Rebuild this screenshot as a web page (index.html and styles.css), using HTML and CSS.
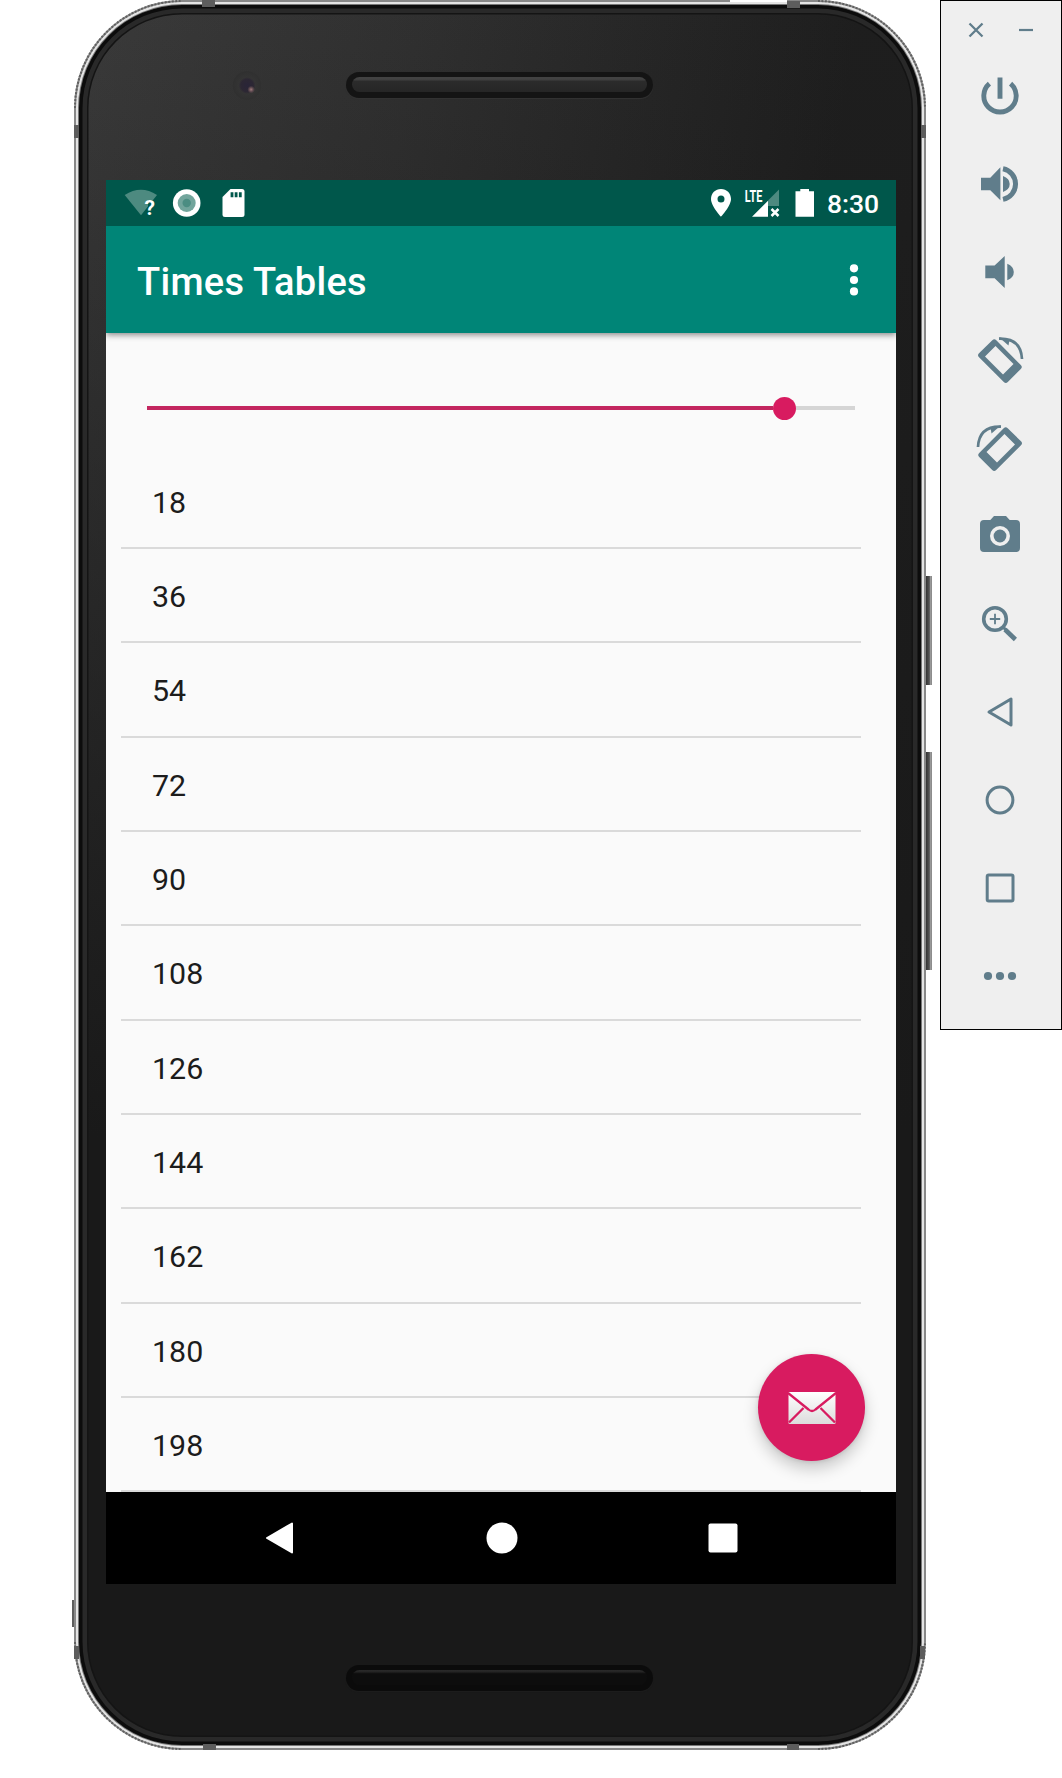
FILE: index.html
```html
<!DOCTYPE html>
<html lang="en">
<head>
<meta charset="utf-8">
<title>Times Tables</title>
<link rel="stylesheet" href="styles.css">
</head>
<body>
<main class="emulator">
  <section class="phone">
    <svg class="shell" width="864" height="1754" viewBox="0 0 864 1754" aria-hidden="true">
      <defs>
        <linearGradient id="key" x1="0" x2="1" y1="0" y2="0"><stop offset="0" stop-color="#333"/><stop offset=".55" stop-color="#555"/><stop offset=".8" stop-color="#aaa"/><stop offset="1" stop-color="#777"/></linearGradient>
      </defs>
      <g fill="none" stroke="#606060" stroke-width="2" stroke-dasharray="2 1.5">
        <path d="M7 108A107 107 0 0 1 114 1M750 1A107 107 0 0 1 857 108M7 1642A107 107 0 0 0 114 1749M750 1749A107 107 0 0 0 857 1642"/>
      </g>
      <path d="M662 0h57v2h-57z" fill="#fff"/>
      <g fill="#5d5d5d">
        <path d="M134 0h13v7h-13zM719 1h13v7h-13zM6 125h5v13H6zM853 125h5v13h-5z"/>
        <path d="M135 1744h13v6h-13zM719 1744h12v6h-12zM6 1646h5v13H6zM852 1646h5v13h-5zM4 1600h2v27H4z"/>
      </g>
      <path d="M858 576h6v109h-6zM858 752h6v218h-6z" fill="url(#key)"/>
    </svg>

    <header class="bezel bezel-top">
      <span class="camera"></span>
      <span class="speaker"></span>
    </header>

    <div class="screen">
      <div class="status">
        <svg width="130" height="46" viewBox="0 0 130 46">
          <path d="M18.700 15Q35 4.500 51 15L35 35.300z" fill="#4d8a80"/>
          <path d="M42 20h12v18H42z" fill="#00574b"/>
          <text class="question" x="38.500" y="34.500">?</text>
          <circle cx="80.700" cy="23" r="13.800" fill="#fff"/><circle cx="80.700" cy="23" r="9" fill="#72a59c"/><circle cx="80.700" cy="23" r="4.200" fill="#4b8d82"/>
        </svg>
        <svg class="sd" width="24" height="46" viewBox="0 0 24 46"><path d="M8.500 9H20q2.500 0 2.500 2.500v23q0 2.500-2.500 2.500H3q-2.500 0-2.500-2.500V17z" fill="#fff"/><path d="M8.600 12.200h2.800v5H8.600zm4.100 0h2.800v5h-2.800zm4.200 0h2.800v5h-2.800z" fill="#00574b"/></svg>
        <span class="grow"></span>
        <svg width="118" height="46" viewBox="0 0 118 46">
          <path fill="#fff" fill-rule="evenodd" d="M15 9C9.300 9 5 13.300 5 19c0 7.200 10 17.700 10 17.700S25 26.200 25 19C25 13.300 20.700 9 15 9zm0 6.600a3.500 3.500 0 1 1 0 7 3.500 3.500 0 0 1 0-7z"/>
          <text class="lte" x="38.800" y="21.900" textLength="17.500" lengthAdjust="spacingAndGlyphs">LTE</text>
          <path d="M73 9.500V26H62v-5.500z" fill="#4d8a80"/>
          <path d="M46 36.800 62 20.800v16z" fill="#fff"/>
          <path d="m65.500 29 7 7m0-7-7 7" stroke="#fff" stroke-width="2.500"/>
          <path d="M89.500 11.300h4.800V9h8.700v2.300h5v25.500H89.500z" fill="#fff"/>
        </svg>
        <span class="clock">8:30</span>
      </div>
      <div class="appbar">
        <h1>Times Tables</h1>
        <svg width="10" height="34" viewBox="0 0 10 34" fill="#fff"><circle cx="5" cy="5.300" r="4.100"/><circle cx="5" cy="17" r="4.100"/><circle cx="5" cy="28.400" r="4.100"/></svg>
      </div>
      <div class="content">
        <div class="slider"><span class="filled"></span><span class="thumb"></span><span class="rest"></span></div>
        <ul class="table">
          <li>18</li><li>36</li><li>54</li><li>72</li><li>90</li><li>108</li><li>126</li><li>144</li><li>162</li><li>180</li><li>198</li>
        </ul>
        <button class="fab" aria-label="Mail">
          <svg width="48" height="34" viewBox="0 0 48 34">
            <defs><linearGradient id="mail" x1="0" x2="0" y1="0" y2="1"><stop offset="0" stop-color="#fff"/><stop offset="1" stop-color="#dcdcdc"/></linearGradient></defs>
            <rect x=".5" y="1" width="47" height="32" rx="1" fill="url(#mail)"/>
            <path d="M0 2 20.500 18.500Q24 21.500 27.500 18.500L48 2M1 31.500 15.500 17M47 31.500 32.500 17" fill="none" stroke="#d81b60" stroke-width="2.300"/>
          </svg>
        </button>
      </div>
      <nav class="navbar">
        <svg width="30" height="34" viewBox="0 0 30 34"><path d="M27 2.500v29L2 17z" fill="#fff" stroke="#fff" stroke-width="2" stroke-linejoin="round"/></svg>
        <svg width="32" height="32" viewBox="0 0 32 32"><circle cx="16" cy="16" r="15.500" fill="#fff"/></svg>
        <svg width="30" height="30" viewBox="0 0 30 30"><rect x=".5" y=".5" width="29" height="29" rx="2" fill="#fff"/></svg>
      </nav>
    </div>

    <footer class="bezel bezel-bottom">
      <span class="speaker"></span>
    </footer>
  </section>

  <aside class="tools">
    <div class="window">
      <svg width="16" height="16" viewBox="0 0 16 16"><path d="m1.500 1.500 13 13m0-13-13 13" stroke="#607d8b" stroke-width="2.300"/></svg>
      <svg width="14" height="16" viewBox="0 0 14 16"><path d="M0 8h14" stroke="#607d8b" stroke-width="2.200"/></svg>
    </div>
    <svg class="tool" viewBox="0 0 48 48"><path d="M13.400 11.600A16.200 16.200 0 1 0 34.600 11.600M24 5.400v21.300" class="line" stroke-width="4.900"/></svg>
    <svg class="tool" viewBox="0 0 48 48"><path d="M5 17.700h9.300L24.400 7.300v33L14.300 30.300H5zM27 16q6.700 2.500 6.700 8T27 32z"/><path d="M27 8.800A15.600 15.600 0 0 1 27 39.400" class="line" stroke-width="5"/></svg>
    <svg class="tool" viewBox="0 0 48 48"><path d="M9.300 17.600h9.300L28.700 8v32L18.600 30.300H9.300zM31.300 15.700q6.500 2.700 6.500 8.300t-6.500 8.300z"/></svg>
    <svg class="tool" viewBox="0 0 48 48"><path fill-rule="evenodd" d="M16.300 4.200 3 17.300q-2 2 0 4L27.800 46q2 2 4 0L44.800 33q2-2 0-4L20.300 4.200q-2-2-4 0zM19.500 10 37.500 28 27 38.500 9 20.500z"/><path d="M23 2.600Q45 2 46 23" class="line" stroke-width="2.700"/><path d="M23 1.300 32.500 9.500 33.500 4z"/></svg>
    <svg class="tool mirror" viewBox="0 0 48 48"><path fill-rule="evenodd" d="M16.300 4.200 3 17.300q-2 2 0 4L27.800 46q2 2 4 0L44.800 33q2-2 0-4L20.300 4.200q-2-2-4 0zM19.500 10 37.500 28 27 38.500 9 20.500z"/><path d="M23 2.600Q45 2 46 23" class="line" stroke-width="2.700"/><path d="M23 1.300 32.500 9.500 33.500 4z"/></svg>
    <svg class="tool" viewBox="0 0 48 48"><path fill-rule="evenodd" d="M18 4 14.300 8H8q-4 0-4 4v24q0 4 4 4h32q4 0 4-4V12q0-4-4-4h-6.300L30 4zM24 14a10 10 0 1 1 0 20 10 10 0 0 1 0-20z"/><circle cx="24" cy="24" r="6.400"/></svg>
    <svg class="tool" viewBox="0 0 48 48"><circle cx="19" cy="19" r="11.300" class="line" stroke-width="3.600"/><path d="M19 13.800v10.400M13.800 19h10.400" class="line" stroke-width="1.800"/><path d="m27 27 3 3" class="line" stroke-width="3"/><path d="m29 29.500 10.400 10" class="line" stroke-width="4.600"/></svg>
    <svg class="tool" viewBox="0 0 48 48"><path d="M13 24 35 11v26z" class="line" stroke-width="3" stroke-linejoin="round"/></svg>
    <svg class="tool" viewBox="0 0 48 48"><circle cx="24" cy="24" r="12.900" class="line" stroke-width="3"/></svg>
    <svg class="tool" viewBox="0 0 48 48"><rect x="11.200" y="11" width="25.800" height="26" rx="1.500" class="line" stroke-width="3"/></svg>
    <svg class="tool" viewBox="0 0 48 48"><circle cx="12" cy="24" r="4.100"/><circle cx="24" cy="24" r="4.100"/><circle cx="36" cy="24" r="4.100"/></svg>
  </aside>
</main>
</body>
</html>
```
FILE: styles.css
```css
* { box-sizing: border-box; }
body {
  margin: 0;
  background: #fff;
  font-family: Roboto, "Liberation Sans", sans-serif;
}
svg { display: block; flex: none; }

.emulator {
  display: flex;
  align-items: flex-start;
  width: 1062px;
  height: 1778px;
  padding-left: 74px;
}

/* Phone body: nested rings run from the metal rim to the glass edge. */
.phone {
  position: relative;
  display: flex;
  flex-direction: column;
  width: 852px;
  height: 1750px;
  padding: 0 30px 0 32px;
  border-radius: 108px;
  background:
    linear-gradient(to bottom, transparent 0, #191919 65%),
    linear-gradient(100deg, #3b3b3b 0%, #303030 30%, #1e1e1e 68%);
  box-shadow:
    inset 0 0 0 2px #888,
    inset 0 0 0 4px #e4e4e4,
    inset 0 0 0 5px #777,
    inset 0 0 0 8.500px #0c0c0c,
    inset 0 0 0 13px #292929,
    inset 0 0 0 14.500px #141414;
}
.shell { position: absolute; left: -6px; top: 0; }

.bezel { display: flex; flex: none; }
.bezel-top { height: 180px; padding: 71px 0 0 126px; gap: 85px; }
.bezel-bottom { height: 166px; padding: 81px 0 0 240px; }
.camera {
  width: 29px;
  height: 29px;
  border-radius: 50%;
  background: radial-gradient(circle at 66% 64%, #a07a7c 0, #5c484e 8%, transparent 14%), radial-gradient(circle at 52% 50%, #292438 0, #2c2733 30%, #343434 40%, #303030 66%, transparent 70%);
}
.speaker {
  width: 307px;
  height: 26px;
  margin-top: 1px;
  padding: 5px 6px;
  border-radius: 13px;
  background: #141414;
  box-shadow: 0 1px 1px #333;
}
.speaker::before {
  content: "";
  display: block;
  height: 15px;
  border-radius: 8px;
  background: linear-gradient(#424242 0, #424242 15%, #2b2b2b 30%, #262626 100%);
}
.bezel-bottom .speaker { margin-top: 0; background: #0b0b0b; box-shadow: 0 1px 1px #1d1d1d; }
.bezel-bottom .speaker::before { background: linear-gradient(#2a2a2a 0, #242424 12%, #0d0d0d 25%); }

.screen {
  display: flex;
  flex-direction: column;
  width: 790px;
  height: 1404px;
  flex: none;
}
.status {
  display: flex;
  height: 46px;
  padding-right: 17px;
  background: #00574b;
  color: #fff;
}
.status svg { overflow: visible; }
.status .sd { margin-left: -14px; }
.grow { flex: 1; }
.question { font: 700 21px Roboto, sans-serif; fill: #fff; }
.lte { font: 700 17px Roboto, sans-serif; fill: #fff; }
.clock { margin-left: 3px; font-size: 26.500px; font-weight: 500; line-height: 47px; width: 52px; white-space: nowrap; }
.appbar {
  position: relative;
  z-index: 1;
  display: flex;
  align-items: center;
  justify-content: space-between;
  height: 107.300px;
  flex: none;
  padding: 0 37.500px 0 31px;
  background: #008577;
  box-shadow: 0 2px 6px rgba(0, 0, 0, .45);
  clip-path: inset(0 0 -12px 0);
  color: #fff;
}
.appbar h1 { margin: 4px 0 0; font-size: 38px; font-weight: 500; line-height: 44px; letter-spacing: .280px; }

.content {
  position: relative;
  flex: 1;
  overflow: hidden;
  padding: 60.200px 35px 0 15px;
  background: #fafafa;
}
.slider { display: flex; align-items: center; height: 30px; margin: 0 6px 0 25.500px; }
.filled { width: 626px; height: 4px; background: #c3265f; }
.thumb { width: 23px; height: 23px; border-radius: 50%; background: #d81b60; }
.rest { flex: 1; height: 4px; background: #d5d5d5; }
.table { margin: 31.400px 0 0; padding: 0; list-style: none; }
.table li {
  height: 94.300px;
  padding: 2px 0 0 31px;
  border-bottom: 2px solid #dadada;
  color: #1c1c1c;
  font-size: 30.400px;
  line-height: 92px;
}
.fab {
  position: absolute;
  right: 31px;
  bottom: 31px;
  display: grid;
  place-items: center;
  width: 107px;
  height: 107px;
  padding: 0;
  border: 0;
  border-radius: 50%;
  background: #d81b60;
  box-shadow: 0 8px 16px rgba(0, 0, 0, .2), 0 1px 4px rgba(0, 0, 0, .1);
}
.navbar {
  display: flex;
  align-items: center;
  justify-content: space-between;
  height: 92px;
  flex: none;
  padding: 0 158px 0 159px;
  background: #000;
}

.tools {
  display: flex;
  flex-direction: column;
  align-items: center;
  width: 122px;
  height: 1030px;
  margin-left: 14px;
  border: 1px solid #000;
  background: #efefef;
}
.window { display: flex; align-items: center; gap: 35px; height: 51px; flex: none; padding: 7px 2px 0 0; }
.tool { width: 48px; height: 48px; margin: 20px 2px 20px 0; fill: #607d8b; }
.tool .line { fill: none; stroke: #607d8b; }
.mirror { transform: scaleX(-1); }
```
